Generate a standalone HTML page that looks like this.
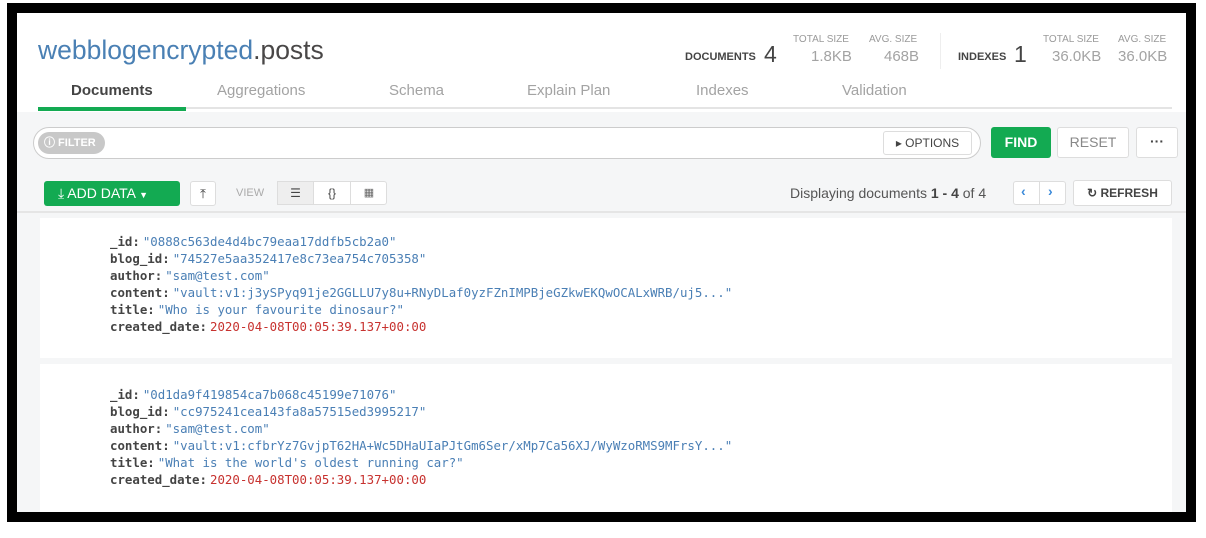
<!DOCTYPE html>
<html><head><meta charset="utf-8"><style>
*{margin:0;padding:0;box-sizing:border-box}
body{width:1206px;height:538px;background:#fff;position:relative;overflow:hidden;font-family:"Liberation Sans",sans-serif}
.a{position:absolute;white-space:nowrap}
#frame{left:7px;top:3px;width:1189px;height:519px;background:#000}
#in{left:17px;top:13px;width:1169px;height:499px;background:#f5f6f7;overflow:hidden}
.hdr{left:0;top:0;width:1169px;height:99px;background:#fff}
.tab{font-size:15px;color:#a3a3a3;top:69px}
.sm{font-size:10px;color:#9a9a9a}
.big{font-size:15px;color:#a3a3a3}
.btn{background:#fff;border:1px solid #ddd;border-radius:3px}
.mono{font-family:"DejaVu Sans Mono","Liberation Mono",monospace;font-size:12.4px;line-height:17px;color:#4a7fb5}
.mono b{color:#444;font-weight:bold;margin-right:3px}
.mono i{font-style:normal;color:#c7322f}
.card{background:#fff;left:23px;width:1132px}
</style></head><body>
<div class="a" id="frame"></div>
<div class="a" id="in">
 <div class="a hdr"></div>
 <div class="a" style="left:21px;top:22px;font-size:26.5px;color:#4a80b4">webblogencrypted<span style="color:#494747">.posts</span></div>
 <div class="a tab" style="left:54px;color:#444;font-weight:bold">Documents</div>
 <div class="a tab" style="left:200px">Aggregations</div>
 <div class="a tab" style="left:372px">Schema</div>
 <div class="a tab" style="left:510px">Explain Plan</div>
 <div class="a tab" style="left:679px">Indexes</div>
 <div class="a tab" style="left:825px">Validation</div>
 <div class="a" style="left:21px;top:94px;width:1134px;height:2px;background:#e4e4e4"></div>
 <div class="a" style="left:21px;top:94px;width:148px;height:4px;background:#13aa52"></div>
 <div class="a" style="left:668px;top:38px;font-size:11px;font-weight:bold;color:#444">DOCUMENTS</div>
 <div class="a" style="left:747px;top:28px;font-size:23px;color:#444">4</div>
 <div class="a sm" style="left:776px;top:21px">TOTAL SIZE</div>
 <div class="a big" style="left:794px;top:35px">1.8KB</div>
 <div class="a sm" style="left:852px;top:21px">AVG. SIZE</div>
 <div class="a big" style="left:867px;top:35px">468B</div>
 <div class="a" style="left:923px;top:20px;width:1px;height:36px;background:#eee"></div>
 <div class="a" style="left:941px;top:38px;font-size:11px;font-weight:bold;color:#444">INDEXES</div>
 <div class="a" style="left:997px;top:28px;font-size:23px;color:#444">1</div>
 <div class="a sm" style="left:1026px;top:21px">TOTAL SIZE</div>
 <div class="a big" style="left:1035px;top:35px">36.0KB</div>
 <div class="a sm" style="left:1101px;top:21px">AVG. SIZE</div>
 <div class="a big" style="left:1101px;top:35px">36.0KB</div>

 <div class="a" style="left:16px;top:114px;width:948px;height:32px;background:#fff;border:1px solid #ccc;border-radius:16px"></div>
 <div class="a" style="left:21px;top:119px;width:67px;height:22px;background:#c8c8c8;border-radius:11px;color:#fff;font-size:11px;font-weight:bold;line-height:22px;padding-left:6px">ⓘ FILTER</div>
 <div class="a btn" style="left:866px;top:118px;width:89px;height:24px;font-size:12px;color:#444;line-height:22px;text-align:center;font-weight:500">▸ OPTIONS</div>
 <div class="a" style="left:974px;top:114px;width:60px;height:31px;background:#13aa52;border-radius:3px;color:#fff;font-weight:bold;font-size:14px;line-height:31px;text-align:center">FIND</div>
 <div class="a btn" style="left:1040px;top:114px;width:72px;height:31px;color:#888;font-size:14px;line-height:29px;text-align:center">RESET</div>
 <div class="a btn" style="left:1119px;top:114px;width:42px;height:31px;color:#444;font-size:14px;line-height:26px;text-align:center;font-weight:bold">···</div>

 <div class="a" style="left:27px;top:168px;width:136px;height:25px;background:#13aa52;border-radius:3px;color:#fff;font-size:14px;line-height:25px;padding-left:14px;font-weight:500">⤓ ADD DATA <span style="font-size:9px">▼</span></div>
 <div class="a btn" style="left:173px;top:168px;width:26px;height:25px;text-align:center;font-size:13px;line-height:23px;color:#444">⤒</div>
 <div class="a" style="left:219px;top:174px;font-size:11px;color:#aaa">VIEW</div>
 <div class="a btn" style="left:260px;top:168px;width:110px;height:24px"></div>
 <div class="a" style="left:260px;top:168px;width:37px;height:24px;background:#eee;border:1px solid #ddd;text-align:center;font-size:12px;line-height:22px;color:#444">☰</div>
 <div class="a" style="left:297px;top:168px;width:37px;height:24px;border-right:1px solid #ddd;text-align:center;font-size:12px;line-height:24px;color:#444">{}</div>
 <div class="a" style="left:334px;top:168px;width:36px;height:24px;text-align:center;font-size:11px;line-height:24px;color:#666">▦</div>
 <div class="a" style="left:773px;top:172px;font-size:14px;color:#555">Displaying documents <b style="font-weight:600;color:#444">1 - 4</b> of 4</div>
 <div class="a btn" style="left:996px;top:168px;width:53px;height:24px"></div>
 <div class="a" style="left:1004px;top:170px;font-size:14px;color:#3b8ad9;font-weight:bold">‹</div>
 <div class="a" style="left:1031px;top:170px;font-size:14px;color:#3b8ad9;font-weight:bold">›</div>
 <div class="a" style="left:1022px;top:168px;width:1px;height:24px;background:#ddd"></div>
 <div class="a btn" style="left:1056px;top:167px;width:99px;height:26px;font-size:12px;line-height:24px;text-align:center;color:#444;font-weight:bold">↻ REFRESH</div>
 <div class="a" style="left:0;top:198px;width:1169px;height:2px;background:#e5e5e5"></div>

 <div class="a card" style="top:205px;height:140px"></div>
 <div class="a mono" style="left:93px;top:220px"><b>_id:</b>"0888c563de4d4bc79eaa17ddfb5cb2a0"<br><b>blog_id:</b>"74527e5aa352417e8c73ea754c705358"<br><b>author:</b>"sam@test.com"<br><b>content:</b>"vault:v1:j3ySPyq91je2GGLLU7y8u+RNyDLaf0yzFZnIMPBjeGZkwEKQwOCALxWRB/uj5..."<br><b>title:</b>"Who is your favourite dinosaur?"<br><b>created_date:</b><i>2020-04-08T00:05:39.137+00:00</i></div>
 <div class="a card" style="top:351px;height:150px"></div>
 <div class="a mono" style="left:93px;top:373px"><b>_id:</b>"0d1da9f419854ca7b068c45199e71076"<br><b>blog_id:</b>"cc975241cea143fa8a57515ed3995217"<br><b>author:</b>"sam@test.com"<br><b>content:</b>"vault:v1:cfbrYz7GvjpT62HA+Wc5DHaUIaPJtGm6Ser/xMp7Ca56XJ/WyWzoRMS9MFrsY..."<br><b>title:</b>"What is the world's oldest running car?"<br><b>created_date:</b><i>2020-04-08T00:05:39.137+00:00</i></div>
</div>
</body></html>
